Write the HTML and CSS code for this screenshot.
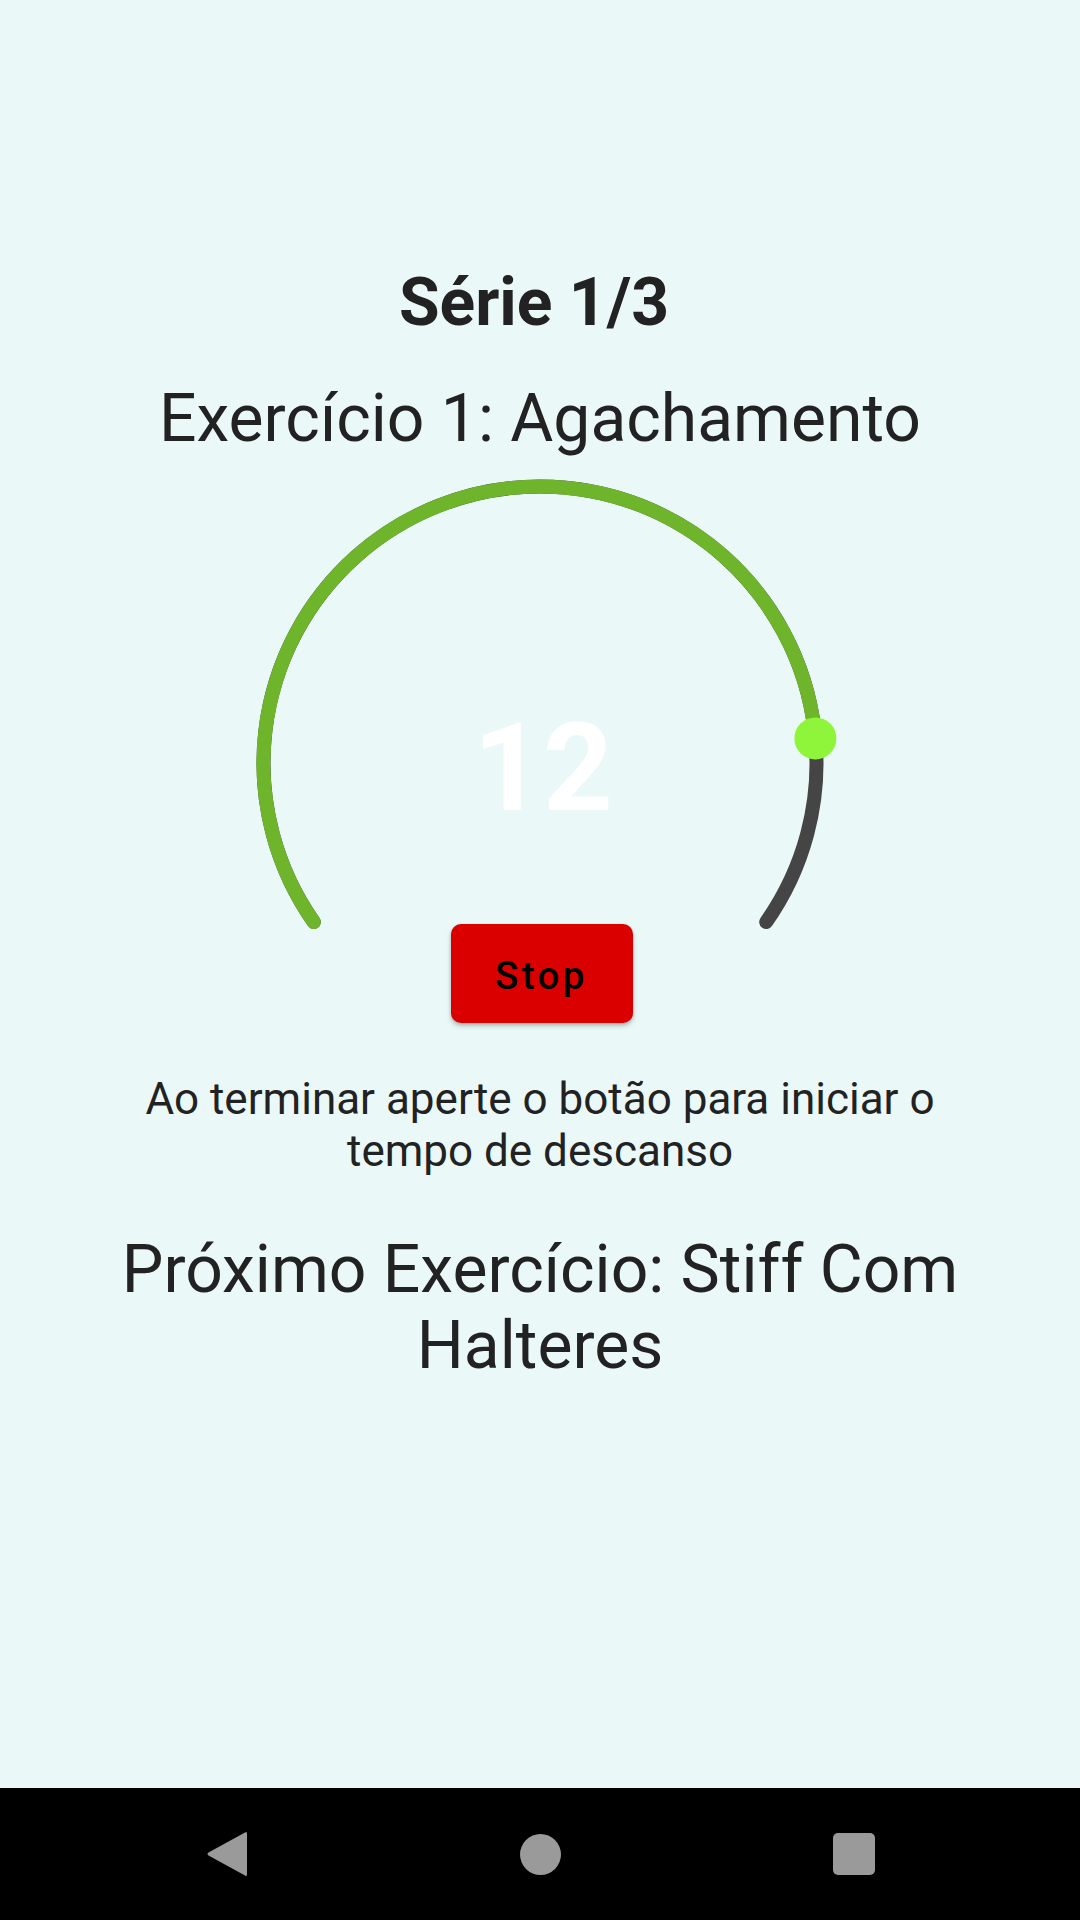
FILE: index.html
```html
<!DOCTYPE html>
<html lang="pt">
<head>
<meta charset="utf-8">
<title>Série</title>
<link rel="stylesheet" href="styles.css">
</head>
<body>
<div class="screen">
  <main class="content">
    <h1 class="serie">Série 1/3</h1>
    <h2 class="exercise">Exercício 1: Agachamento</h2>
    <div class="gauge">
      <svg class="gauge-svg" width="580" height="450" viewBox="0 0 580 450">
        <path class="track" d="M 63.8 449 A 276.5 276.5 0 1 1 516.2 449"/>
        <path class="progress" d="M 63.8 449 A 276.5 276.5 0 1 1 565.4 265.4"/>
        <circle class="thumb" cx="565.4" cy="265.4" r="21"/>
      </svg>
      <div class="count">12</div>
    </div>
    <button class="stop">Stop</button>
    <p class="hint">Ao terminar aperte o botão para iniciar o tempo de descanso</p>
    <p class="next">Próximo Exercício: Stiff Com Halteres</p>
  </main>
  <nav class="navbar">
    <svg class="nav-icon" width="42" height="46" viewBox="0 0 42 46">
      <path d="M39 1.5 Q41 0 41 3 L41 43 Q41 46 39 44.5 L2.5 24.5 Q0.5 23 2.5 21.5 Z" fill="#9a9a9a"/>
    </svg>
    <span class="nav-home"></span>
    <span class="nav-recent"></span>
  </nav>
</div>
</body>
</html>
```
FILE: styles.css
```css
html, body {
  margin: 0;
  padding: 0;
}
body {
  width: 1080px;
  height: 1920px;
  background: #eaf8f8;
  font-family: Roboto, "Noto Sans", sans-serif;
  color: #222222;
  overflow: hidden;
}
.screen {
  display: flex;
  flex-direction: column;
  height: 1920px;
}
.content {
  flex: 1;
  display: flex;
  flex-direction: column;
  align-items: center;
  padding: 264px 88px 0;
}
.serie {
  margin: 0;
  padding-right: 12px;
  font-size: 66px;
  font-weight: 700;
  line-height: normal;
  text-align: center;
}
.exercise {
  margin: 39px 0 0;
  font-size: 66px;
  font-weight: 400;
  line-height: normal;
  text-align: center;
}
.gauge {
  position: relative;
  width: 580px;
  height: 450px;
  margin-top: 16px;
}
.gauge-svg {
  display: block;
  overflow: visible;
}
.track {
  fill: none;
  stroke: #454545;
  stroke-width: 14;
  stroke-linecap: round;
}
.progress {
  fill: none;
  stroke: #6fb52c;
  stroke-width: 14;
  stroke-linecap: round;
}
.thumb {
  fill: #8ff53a;
}
.count {
  position: absolute;
  left: 0;
  right: 0;
  top: 235px;
  text-align: center;
  font-size: 122px;
  font-weight: 700;
  line-height: 1;
  color: #ffffff;
  padding-left: 6px;
}
.stop {
  width: 182px;
  height: 99px;
  margin: 1px 0 0 3px;
  padding: 3px 0 0;
  border: none;
  border-radius: 10px;
  background: #db0000;
  color: #000000;
  font-family: Roboto, "Noto Sans", sans-serif;
  font-size: 38.5px;
  font-weight: 500;
  letter-spacing: 3.4px;
  box-shadow: 0 3px 5px rgba(0, 0, 0, 0.22), 0 1px 3px rgba(0, 0, 0, 0.12);
}
.hint {
  margin: 50px 0 0;
  font-size: 44px;
  line-height: 52px;
  text-align: center;
}
.next {
  margin: 55px 0 0;
  font-size: 66px;
  line-height: 76px;
  text-align: center;
}
.navbar {
  height: 132px;
  background: #000000;
  display: flex;
  justify-content: center;
  align-items: center;
  gap: 272px;
}
.nav-icon {
  display: block;
}
.nav-home {
  width: 41px;
  height: 41px;
  border-radius: 50%;
  background: #9a9a9a;
}
.nav-recent {
  width: 42px;
  height: 42px;
  border-radius: 5px;
  background: #9a9a9a;
}
```
